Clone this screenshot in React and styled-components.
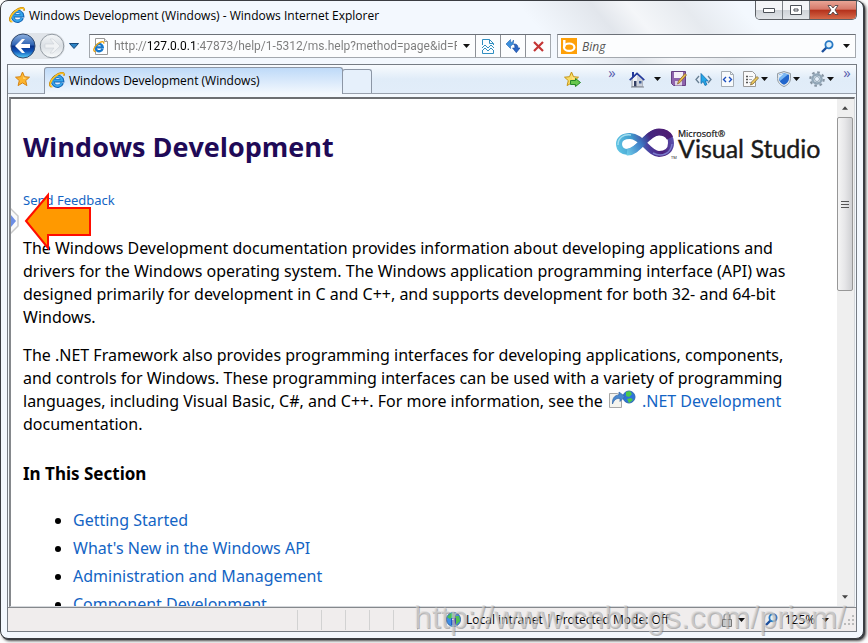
import styled, { createGlobalStyle, css } from "styled-components";

const GlobalStyle = createGlobalStyle`
  * {
    box-sizing: border-box;
  }

  body {
    margin: 0;
    background: #fdfdfd;
    font-family: "Open Sans", "Noto Sans", sans-serif;
    font-size: 12px;
    color: #000;
  }

  button,
  input {
    font: inherit;
    color: inherit;
  }

  button {
    padding: 0;
    border: 0;
    background: none;
  }

  svg {
    display: block;
    flex: none;
  }
`;

const Screen = styled.div`
  position: relative;
  height: 100vh;
  padding: 0 4px 4px 0;
  overflow: hidden;
`;

const Frame = styled.div`
  display: flex;
  flex-direction: column;
  height: 100%;
  padding: 0 6px 6px;
  border: 1px solid #3a3d42;
  border-radius: 8px;
  background:
    linear-gradient(50deg, transparent 62%, #e2e6ec 70%, #f4f6f9 74%, #e6eaef 80%, transparent 86%) 0 0 / 100% 64px no-repeat,
    #f3f8fe;
  box-shadow: 1px 1px 0 #3a3d42, 2px 2px 3px #444;
`;

const TitleBar = styled.header`
  display: flex;
  align-items: flex-start;
  height: 32px;
  padding-left: 2px;
`;

const Title = styled.div`
  flex: 1;
  display: flex;
  align-items: center;
  gap: 4px;
  height: 28px;
`;

const WindowButtons = styled.div`
  display: flex;
  height: 19px;
  border: 1px solid #5c6065;
  border-top: 0;
  border-radius: 0 0 5px 5px;
  overflow: hidden;
`;

const WindowButton = styled.button`
  display: grid;
  place-items: center;
  width: ${(props) => (props.$close ? 46 : 27)}px;
  background: linear-gradient(#f4f5f7 0 48%, #cfd3d8 52%, #e2e5e9);
  border-right: 1px solid #7c8085;

  ${(props) =>
    props.$close &&
    css`
      border-right: 0;
      background: linear-gradient(#e9a596 0, #d6796a 45%, #b5321c 52%, #d66a4a);
    `}
`;

const NavRow = styled.div`
  display: flex;
  align-items: center;
  height: 26px;
  margin-bottom: 5px;
  padding: 0 1px 0 3px;
  gap: 6px;
`;

const History = styled.nav`
  display: flex;
  align-items: center;
  gap: 4px;
  width: 73px;
`;

const RoundPair = styled.div`
  display: flex;
  gap: 3px;
  border-radius: 13px;
  background: #e0e4e9;
`;

const RoundButton = styled.button`
  width: 26px;
  height: 26px;
`;

const Field = styled.div`
  display: flex;
  align-items: center;
  height: 24px;
  min-width: 0;
  border: 1px solid #a3a8ae;
  border-top-color: #6c7178;
  background: #fcfdfe;
  flex: ${(props) => (props.$grow ? "1" : "0 0 299px")};
`;

const FieldIcon = styled.span`
  display: grid;
  place-items: center;
  width: 22px;
`;

const TextInput = styled.input`
  flex: 1;
  min-width: 0;
  height: 22px;
  padding: 0 0 0 2px;
  border: 0;
  outline: 0;
  background: none;

  &::placeholder {
    color: #555;
    font-style: italic;
    opacity: 1;
  }
`;

/* the host name stands out in black, the rest of the address is grey */
const AddressInput = styled(TextInput)`
  color: transparent;
  font-family: Roboto, "Open Sans", sans-serif;
  background: linear-gradient(90deg, #7b7b7b 36px, #000 36px 85px, #7b7b7b 85px);
  background-clip: text;
`;

const FieldButton = styled.button`
  display: grid;
  place-items: center;
  width: ${(props) => props.$width || 25}px;
  height: 22px;
  border-left: ${(props) => (props.$plain ? "0" : "1px solid #8d9197")};
`;

const Panel = styled.div`
  flex: 1;
  min-height: 0;
  display: flex;
  flex-direction: column;
  border: 1px solid #767c84;
  background: #f4f9fe;
`;

const TabBar = styled.div`
  display: flex;
  align-items: stretch;
  height: 29px;
  border-bottom: 1px solid #98a0ac;
  background: linear-gradient(#f8fbfe, #e0ecf8 50%, #e2edf9);
`;

const FavoritesButton = styled.button`
  display: grid;
  place-items: center;
  width: 28px;
  margin-right: 8px;
`;

const Tab = styled.button`
  display: flex;
  align-items: center;
  gap: 4px;
  width: 299px;
  margin: 2px 0 -1px;
  padding: 0 0 2px 4px;
  border: 1px solid #8c96a5;
  border-bottom: 0;
  border-radius: 3px 3px 0 0;
  background: linear-gradient(#bedaf8, #d9e9fb 50%, #f4f9fe);
`;

const NewTab = styled.button`
  width: 30px;
  margin: 4px 0 0 -1px;
  border: 1px solid #8c96a5;
  border-bottom: 0;
  border-radius: 3px 3px 0 0;
  background: #e6f0fb;
`;

const Commands = styled.div`
  flex: 1;
  display: flex;
  justify-content: flex-end;
  align-items: center;
`;

const Command = styled.button`
  display: flex;
  align-items: center;
  justify-content: center;
  gap: ${(props) => props.$gap || 2}px;
  width: ${(props) => props.$width || 24}px;
  height: 24px;
`;

const More = styled.button`
  align-self: flex-start;
  width: ${(props) => props.$width || 18}px;
  height: 14px;
  color: #5a5fae;
  font-size: 15px;
  line-height: 10px;
`;

const Viewport = styled.div`
  position: relative;
  flex: 1;
  min-height: 0;
  display: flex;
  margin: 3px 1px 0;
  border: 2px solid #6d6f72;
  border-right: 1px solid #d5d8dc;
  border-bottom: 1px solid #d5d8dc;
  border-left-color: #85888c;
  background: #fff;
`;

const Article = styled.main`
  flex: 1;
  min-width: 0;
  padding: 29px 16px 0 12px;
  overflow: hidden;
  font-family: "Noto Sans", "Open Sans", sans-serif;
  font-size: 16px;
  line-height: 23px;

  p {
    margin: 0 16px 15px 0;
  }
`;

const Link = styled.a`
  color: #1364c4;
  text-decoration: none;
`;

const InlineIcon = styled.span`
  display: inline-block;
  margin: 0 6px 0 2px;
  vertical-align: -1px;
`;

const ArticleHeader = styled.div`
  display: flex;
  justify-content: space-between;
  align-items: flex-start;
  height: 62px;
`;

const Heading = styled.h1`
  margin: 0;
  color: #1f0a57;
  font-family: "Open Sans", sans-serif;
  font-size: 27px;
  line-height: 38px;
`;

const Feedback = styled.p`
  && {
    margin-bottom: 27px;
  }
  font-size: 13px;
  line-height: 20px;
`;

const Section = styled.h2`
  margin: 26px 0 24px;
  font-size: 17px;
  line-height: 23px;
`;

const Topics = styled.ul`
  margin: 0;
  padding-left: 50px;

  li {
    margin-bottom: 5px;
  }
`;

const Scrollbar = styled.div`
  display: flex;
  flex-direction: column;
  width: 17px;
  padding-right: 1px;
  background: #efefef;
`;

const ScrollButton = styled.button`
  display: grid;
  place-items: center;
  height: 18px;
`;

const ScrollTrack = styled.div`
  flex: 1;
`;

const Thumb = styled.div`
  display: grid;
  place-items: center;
  height: 37%;
  border: 1px solid #979797;
  border-radius: 2px;
  background: linear-gradient(90deg, #f5f5f5, #e6e6e8 50%, #cfd0d3);
`;

const Flyout = styled.button`
  position: absolute;
  left: 0;
  top: 108px;
`;

const Callout = styled.div`
  position: absolute;
  left: 13px;
  top: 93px;
`;

const StatusBar = styled.footer`
  display: flex;
  align-items: center;
  height: 24px;
  border-top: 1px solid #85888c;
  background: #f0eded;
`;

const Cell = styled.div`
  width: 24px;
  height: 20px;
  border-left: 1px solid #d2d2d2;
`;

const Spacer = styled.div`
  flex: 1;
`;

const Zone = styled.div`
  display: flex;
  align-items: center;
  gap: 5px;
  width: 275px;
  padding-left: 5px;
`;

const StatusButton = styled.button`
  display: flex;
  align-items: center;
  justify-content: space-between;
  width: ${(props) => props.$width}px;
  height: 20px;
  padding: 0 5px;
  margin-right: 10px;
`;

const Watermark = styled.div`
  position: absolute;
  right: 22px;
  bottom: 8px;
  color: rgba(214, 214, 214, 0.6);
  font-family: "Liberation Sans", Arial, sans-serif;
  font-size: 32px;
  line-height: 36px;
  text-shadow: 1px 1px 0 rgba(120, 120, 120, 0.5);
  pointer-events: none;
`;

function Caret({ color = "#111", up, small }) {
  return (
    <svg width={small ? 6 : 7} height="4" viewBox="0 0 7 4">
      <path d={up ? "M0 4h7L3.5 0z" : "M0 0h7L3.5 4z"} fill={color} />
    </svg>
  );
}

function IeLogo({ size = 16 }) {
  return (
    <svg width={size} height={size} viewBox="0 0 16 16">
      <path d="M13.3 11A5 5 0 1 1 13.6 8.8H5" fill="none" stroke="#1262b4" strokeWidth="3.4" />
      <path d="M12.9 10.8A4.8 4.8 0 1 1 13.2 8.6H5" fill="none" stroke="#36a4e9" strokeWidth="2" />
      <path d="M4.4 5.8Q6 3.7 9 3.5" fill="none" stroke="#a5defa" strokeWidth="1" />
      <path d="M2.6 14.8C-.8 13.6 1.2 8.4 6.3 4.1 10.8.4 15.6-.5 14.9 3.6" fill="none" stroke="#c98a0b" strokeWidth="2" />
      <path d="M3.6 14.8C-.4 14.4 1 9.200 5.600 4.800 10 .9 14.900-.2 14.600 2.900" fill="none" stroke="#ffc928" strokeWidth="1.200" />
    </svg>
  );
}

function PageLogo() {
  return (
    <svg width="16" height="17" viewBox="0 0 16 17">
      <path d="M2.5.5h9l3 3v13h-12z" fill="#fff" stroke="#999" />
      <path d="M11.5.5v3h3" fill="#eee" stroke="#999" />
      <g transform="translate(0 3) scale(.72)">
        <path d="M13.3 11A5 5 0 1 1 13.6 8.8H5" fill="none" stroke="#1677cb" strokeWidth="3.2" />
        <path d="M3.6 14.8C-.3 14.6.3 9 6.3 4.1 10.8.4 15.6-.5 14.9 3.6" fill="none" stroke="#eba515" strokeWidth="2" />
      </g>
    </svg>
  );
}

function BackIcon() {
  return (
    <svg width="26" height="26" viewBox="0 0 26 26">
      <defs>
        <linearGradient id="back" x1="0" y1="0" x2="0" y2="1">
          <stop offset="0" stopColor="#8eb1e0" />
          <stop offset=".46" stopColor="#2d62b2" />
          <stop offset=".5" stopColor="#0a2f86" />
          <stop offset=".72" stopColor="#1257ba" />
          <stop offset="1" stopColor="#57d2fa" />
        </linearGradient>
      </defs>
      <circle cx="13" cy="13" r="12" fill="url(#back)" stroke="#30496f" />
      <path d="M5 13l7-7h3l-4 5h9v4h-9l4 5h-3z" fill="#fff" />
    </svg>
  );
}

function ForwardIcon() {
  return (
    <svg width="26" height="26" viewBox="0 0 26 26">
      <defs>
        <linearGradient id="forward" x1="0" y1="0" x2="0" y2="1">
          <stop offset="0" stopColor="#f5f7f9" />
          <stop offset=".5" stopColor="#dadfe4" />
          <stop offset="1" stopColor="#f9fbfc" />
        </linearGradient>
      </defs>
      <circle cx="13" cy="13" r="11.8" fill="url(#forward)" stroke="#939ba3" />
      <path d="M21 13l-7-7h-3l4 5H6v4h9l-4 5h3z" fill="#f0f2f4" stroke="#ccd1d6" strokeWidth=".6" />
    </svg>
  );
}

function CompatIcon() {
  return (
    <svg width="12" height="15" viewBox="0 0 12 15" fill="none" stroke="#318ec1">
      <path d="M.5 6V.5h7l4 4V6M7.5.5v4h4M.5 11v3.5h11V11" />
      <path d="M0 9l3-3 3 3 3-3 3 3M0 12l3-3 3 3 3-3 3 3" />
    </svg>
  );
}

function RefreshIcon() {
  return (
    <svg width="14" height="14" viewBox="0 0 14 14">
      <path d="M0 5l4.500-4.500V3.500Q7 3.500 7.500 1 8 6.500 4.500 6.500v3z" fill="#3b8fdc" stroke="#2263b0" strokeWidth=".6" />
      <path d="M6.500 9H9Q9 6 7.500 5 12 4.500 12 9h2l-3.700 4.700z" fill="#2a66c4" stroke="#1a4a9c" strokeWidth=".6" />
    </svg>
  );
}

function StopIcon() {
  return (
    <svg width="11" height="11" viewBox="0 0 11 11">
      <path d="M1 1l9 9M10 1l-9 9" stroke="#c43535" strokeWidth="2.2" />
    </svg>
  );
}

function BingIcon() {
  return (
    <svg width="16" height="16" viewBox="0 0 16 16">
      <path d="M0 0h16v16H0z" fill="#fea008" />
      <path d="M3.300 2v7" stroke="#fff" strokeWidth="2.400" />
      <ellipse cx="8.200" cy="9.200" rx="5.200" ry="3.700" fill="none" stroke="#fff" strokeWidth="2.200" />
    </svg>
  );
}

function SearchIcon({ size = 13 }) {
  return (
    <svg width={size} height={size} viewBox="0 0 13 13">
      <path d="M6 7l-5 5" stroke="#1c4f9c" strokeWidth="2.400" />
      <circle cx="8" cy="4.700" r="3.600" fill="#dff1fc" stroke="#2879c4" strokeWidth="1.800" />
    </svg>
  );
}

function Star({ add }) {
  return (
    <svg width={add ? 17 : 15} height="16" viewBox={add ? "0 0 17 16" : "0 0 15 16"}>
      <path
        d="M7.500 1l2 4.700 5 .5-3.800 3.400 1.200 5-4.400-2.700-4.400 2.700 1.200-5L.500 6.200l5-.5z"
        fill={add ? "#f9dc64" : "#fcb52e"}
        stroke={add ? "#c59516" : "#d58312"}
        strokeLinejoin="round"
      />
      <path d="M7.500 3l1 3.500 3 .5-3 1z" fill="#ffe9a0" />
      {add && <path d="M6.500 9.500h5v-2l5 4-5 4v-2h-5z" fill="#67c84c" stroke="#26882b" />}
    </svg>
  );
}

function HomeIcon() {
  return (
    <svg width="16" height="17" viewBox="0 0 16 17">
      <path d="M3 1h2v5H3z" fill="#23389a" />
      <path d="M3 8l5-5 5.500 5v7.500H3z" fill="#eef1f5" stroke="#7f8591" strokeWidth=".8" />
      <path d="M8 3l5.500 5v7.500H8z" fill="#cbd0da" />
      <path d="M.700 9.200L8 2.300l7.300 6.900" fill="none" stroke="#24399c" strokeWidth="1.600" />
      <path d="M5 10h2.500v5.500H5z" fill="#344064" />
      <path d="M10 10h2.500v2.500H10z" fill="#3f5c93" />
      <path d="M2 16h13" stroke="#7d818b" />
    </svg>
  );
}

function SaveIcon() {
  return (
    <svg width="16" height="16" viewBox="0 0 16 16">
      <path d="M.5.5h14v14H2.500l-2-2z" fill="#8e63ad" stroke="#664183" />
      <path d="M3 1h9v6H3z" fill="#f5eff8" />
      <path d="M4 10h7v4.500H4z" fill="#ddd3e5" />
      <path d="M6.500 13l1-3L14 2.500l1.500 1.500-6.500 7.500z" fill="#e9c04b" stroke="#8c6632" strokeWidth=".8" />
    </svg>
  );
}

function InspectIcon() {
  return (
    <svg width="17" height="13" viewBox="0 0 17 13">
      <path d="M4 3L1 6.500 4 10M13 3l3 3.500-3 3.500" fill="none" stroke="#687f93" strokeWidth="1.300" />
      <path d="M6 .5v10l2.200-2L10 12.500l2-1-1.800-3.500h3z" fill="#24a6e8" stroke="#166eac" strokeWidth=".8" />
    </svg>
  );
}

function SourceIcon() {
  return (
    <svg width="13" height="16" viewBox="0 0 13 16">
      <path d="M.5.500h9l3 3v12H.5z" fill="#f7fafc" stroke="#a5adb5" />
      <path d="M9.500.5v3h3" fill="none" stroke="#a5adb5" />
      <path d="M5 6L2.500 8.500 5 11M8 6l2.500 2.500L8 11" fill="none" stroke="#1b4ec0" strokeWidth="1.400" />
    </svg>
  );
}

function EditIcon() {
  return (
    <svg width="16" height="16" viewBox="0 0 16 16">
      <path d="M.5.5h9l3 3v12H.5z" fill="#fafafa" stroke="#999" />
      <path d="M3 5.500h2M3 8.500h2M3 11.500h2" stroke="#555" strokeWidth="1.400" />
      <path d="M6 5.500h4M6 8.500h3M6 11.500h2" stroke="#a9afb5" />
      <path d="M7.500 14l1-3 5.500-5.500 1.500 1.500-5.500 6z" fill="#edca5c" stroke="#806735" strokeWidth=".8" />
    </svg>
  );
}

function ShieldIcon() {
  return (
    <svg width="14" height="16" viewBox="0 0 14 16">
      <path d="M7 .6L13.400 2.500v5c0 4-2.600 6.500-6.400 8-3.800-1.500-6.400-4-6.400-8v-5z" fill="#e9edf0" stroke="#8d979f" />
      <path d="M7 2.300l5 1.500v3.700c0 3-2 5-5 6.300-3-1.300-5-3.300-5-6.300V3.800z" fill="#2266cc" />
      <path d="M3 10l8.500-7L7 2.300 2 3.800v3.700z" fill="#78b6f3" />
      <path d="M2 7l5-4.500L2 4z" fill="#d8ecfd" />
    </svg>
  );
}

function GearIcon() {
  return (
    <svg width="16" height="16" viewBox="0 0 16 16">
      <circle cx="8" cy="8" r="6.700" fill="none" stroke="#8795a3" strokeWidth="2.200" strokeDasharray="2.600 2.660" />
      <circle cx="8" cy="8" r="4.500" fill="#edf4f9" stroke="#91a6b7" strokeWidth="2.400" />
      <circle cx="8" cy="8" r="2.500" fill="#e7f1fb" stroke="#6b8498" strokeWidth=".7" />
    </svg>
  );
}

function GlobeIcon() {
  return (
    <svg width="15" height="15" viewBox="0 0 15 15">
      <circle cx="7.500" cy="7.500" r="7" fill="#3f8de6" stroke="#336ca3" />
      <path d="M1 5l4-4 4 1-2 4-3 1zM9 4l4 0 1 5-4 4z" fill="#4fc151" />
      <path d="M5 6h5v7H5z" fill="#1036bd" />
      <path d="M6 7h2v1H6z" fill="#fff" />
    </svg>
  );
}

function ExternalIcon() {
  return (
    <svg width="27" height="18" viewBox="0 0 27 18">
      <path d="M.5 3.500h8l4 3v11H.5z" fill="#f5f4ee" stroke="#a8a8a8" />
      <circle cx="20" cy="7" r="6" fill="#2d74d9" stroke="#336aae" />
      <path d="M17 2l4-1 2 3-3 3-3-1zM18 9l4-1 2 2-4 3z" fill="#4dca49" />
      <path d="M3.500 14C3 8 6 5 10 5V2l6 4.500-5 5V8.500C7 8 5 10 3.500 14z" fill="#4a88cf" stroke="#3568a9" strokeWidth=".7" />
    </svg>
  );
}

function VisualStudioLogo() {
  return (
    <svg width="205" height="36" viewBox="0 0 205 36" role="img" aria-label="Microsoft Visual Studio">
      <defs>
        <linearGradient id="loop" gradientUnits="userSpaceOnUse" x1="0" y1="22" x2="58" y2="8">
          <stop offset="0" stopColor="#62c8e6" />
          <stop offset=".3" stopColor="#3f9bcd" />
          <stop offset=".55" stopColor="#4b3d9e" />
          <stop offset=".75" stopColor="#4a1f7a" />
          <stop offset="1" stopColor="#5b56b4" />
        </linearGradient>
        <linearGradient id="band" gradientUnits="userSpaceOnUse" x1="10" y1="26" x2="50" y2="4">
          <stop offset="0" stopColor="#6fd0ea" />
          <stop offset=".4" stopColor="#3b78c4" />
          <stop offset=".65" stopColor="#43257f" />
          <stop offset="1" stopColor="#4d1d74" />
        </linearGradient>
      </defs>
      <path
        d="M12 24C22 24 31 4 43 4c8 0 12 5 12 11s-4 11-12 11C33 26 26 8 14 8 7 8 3 11 3 16s4 8 9 8z"
        fill="none"
        stroke="url(#loop)"
        strokeWidth="6"
      />
      <path d="M11 24C22 25 31 4 43 4c5 0 9 2 11 6" fill="none" stroke="url(#band)" strokeWidth="7" />
      <path d="M2 17C2 10 7 6 15 7" fill="none" stroke="#a3deef" strokeWidth="1.500" />
      <path d="M37 25c9 5 18 0 19-9" fill="none" stroke="#7a7ccc" strokeWidth="1.500" />
      <text x="62" y="9" fontFamily="Open Sans" fontSize="9" fill="#111" stroke="#111" strokeWidth=".2">Microsoft®</text>
      <text x="62" y="30" fontFamily="Lato" fontSize="25" fill="#1b1b1b" stroke="#1b1b1b" strokeWidth=".4">Visual Studio</text>
      <text x="55" y="31" fontFamily="Open Sans" fontSize="4" fill="#111">TM</text>
    </svg>
  );
}

const topics = [
  "Getting Started",
  "What's New in the Windows API",
  "Administration and Management",
  "Component Development",
];

function BrowserChrome() {
  return (
    <>
      <TitleBar>
        <Title>
          <IeLogo />
          Windows Development (Windows) - Windows Internet Explorer
        </Title>
        <WindowButtons>
          <WindowButton aria-label="Minimize">
            <svg width="12" height="5" viewBox="0 0 12 5">
              <path d="M.5.500h11v4H.5z" fill="#fff" stroke="#4c5158" />
            </svg>
          </WindowButton>
          <WindowButton aria-label="Maximize">
            <svg width="12" height="10" viewBox="0 0 12 10">
              <path d="M.5.500h11v9H.5zM4 4h4v2H4z" fill="#fff" stroke="#4c5158" />
            </svg>
          </WindowButton>
          <WindowButton $close aria-label="Close">
            <svg width="12" height="10" viewBox="0 0 12 10">
              <path d="M1 .5h3l2 2.500 2-2.500h3L8 5l3 4.500H8L6 7 4 9.500H1L4 5z" fill="#fff" stroke="#50474a" strokeWidth=".9" />
            </svg>
          </WindowButton>
        </WindowButtons>
      </TitleBar>
      <NavRow>
        <History>
          <RoundPair>
            <RoundButton aria-label="Back"><BackIcon /></RoundButton>
            <RoundButton aria-label="Forward"><ForwardIcon /></RoundButton>
          </RoundPair>
          <button aria-label="Recent pages">
            <svg width="10" height="6" viewBox="0 0 10 6">
              <path d="M.5.500h9L5 5.500z" fill="#2c83c6" stroke="#174a7c" />
            </svg>
          </button>
        </History>
        <Field $grow>
          <FieldIcon><PageLogo /></FieldIcon>
          <AddressInput
            aria-label="Address"
            defaultValue="http://127.0.0.1:47873/help/1-5312/ms.help?method=page&id=F"
          />
          <FieldButton $plain $width={18} aria-label="Show addresses"><Caret /></FieldButton>
          <FieldButton aria-label="Compatibility view"><CompatIcon /></FieldButton>
          <FieldButton aria-label="Refresh"><RefreshIcon /></FieldButton>
          <FieldButton aria-label="Stop"><StopIcon /></FieldButton>
        </Field>
        <Field>
          <FieldIcon><BingIcon /></FieldIcon>
          <TextInput aria-label="Search" placeholder="Bing" />
          <FieldButton $plain $width={22} aria-label="Search the web"><SearchIcon /></FieldButton>
          <FieldButton $plain $width={17} aria-label="Search options"><Caret /></FieldButton>
        </Field>
      </NavRow>
    </>
  );
}

function Tabs() {
  return (
    <TabBar>
      <FavoritesButton aria-label="Favorites"><Star /></FavoritesButton>
      <Tab>
        <IeLogo />
        Windows Development (Windows)
      </Tab>
      <NewTab aria-label="New tab" />
      <Commands>
        <Command $width={58} aria-label="Add to favorites"><Star add /></Command>
        <More $width={22} aria-label="More favorites">»</More>
        <Command $width={44} $gap={9} aria-label="Home"><HomeIcon /><Caret /></Command>
        <Command aria-label="Save"><SaveIcon /></Command>
        <Command aria-label="Inspect"><InspectIcon /></Command>
        <Command aria-label="View source"><SourceIcon /></Command>
        <Command $width={33} aria-label="Edit"><EditIcon /><Caret /></Command>
        <Command $width={33} aria-label="Safety"><ShieldIcon /><Caret /></Command>
        <Command $width={33} aria-label="Tools"><GearIcon /><Caret /></Command>
        <More aria-label="More commands">»</More>
      </Commands>
    </TabBar>
  );
}

function HelpPage() {
  return (
    <Article>
      <ArticleHeader>
        <Heading>Windows Development</Heading>
        <VisualStudioLogo />
      </ArticleHeader>
      <Feedback>
        <Link href="#feedback">Send Feedback</Link>
      </Feedback>
      <p>
        The Windows Development documentation provides information about developing applications and
        drivers for the Windows operating system. The Windows application programming interface (API) was
        designed primarily for development in C and C++, and supports development for both 32- and 64-bit
        Windows.
      </p>
      <p>
        The .NET Framework also provides programming interfaces for developing applications, components,
        and controls for Windows. These programming interfaces can be used with a variety of programming
        languages, including Visual Basic, C#, and C++. For more information, see the{" "}
        <InlineIcon><ExternalIcon /></InlineIcon>
        <Link href="#net">.NET Development</Link> documentation.
      </p>
      <Section>In This Section</Section>
      <Topics>
        {topics.map((topic) => (
          <li key={topic}>
            <Link href="#topic">{topic}</Link>
          </li>
        ))}
      </Topics>
    </Article>
  );
}

function Status() {
  return (
    <StatusBar>
      <Spacer />
      {[1, 2, 3, 4, 5, 6].map((cell) => (
        <Cell key={cell} />
      ))}
      <Zone>
        <GlobeIcon />
        Local intranet | Protected Mode: Off
      </Zone>
      <StatusButton $width={34} aria-label="Privacy">
        <svg width="12" height="14" viewBox="0 0 12 14">
          <path d="M3 7V4a3 3 0 0 1 6 0v3" fill="none" stroke="#999" strokeWidth="1.500" />
          <path d="M1.500 6.500h9v7h-9z" fill="#c5c7c9" stroke="#777" />
        </svg>
        <Caret />
      </StatusButton>
      <StatusButton $width={74} aria-label="Zoom level">
        <SearchIcon />
        125%
        <Caret />
      </StatusButton>
      <svg width="12" height="12" viewBox="0 0 12 12">
        <path d="M8 1h2v2H8zM4 5h2v2H4zM8 5h2v2H8zM0 9h2v2H0zM4 9h2v2H4zM8 9h2v2H8z" fill="#bbb" />
      </svg>
    </StatusBar>
  );
}

export default function App() {
  return (
    <Screen>
      <GlobalStyle />
      <Frame>
        <BrowserChrome />
        <Panel>
          <Tabs />
          <Viewport>
            <HelpPage />
            <Scrollbar>
              <ScrollButton aria-label="Scroll up"><Caret up small color="#444" /></ScrollButton>
              <ScrollTrack>
                <Thumb>
                  <svg width="8" height="8" viewBox="0 0 8 8">
                    <path d="M0 1.500h8M0 4.500h8M0 7.500h8" stroke="#555" />
                  </svg>
                </Thumb>
              </ScrollTrack>
              <ScrollButton aria-label="Scroll down"><Caret small color="#444" /></ScrollButton>
            </Scrollbar>
            <Flyout aria-label="Show contents">
              <svg width="8" height="28" viewBox="0 0 8 28">
                <path d="M-1 1l8 8v10l-8 8z" fill="#fafafa" stroke="#c9c9c9" strokeWidth="1.500" />
                <path d="M0 8l5 6-5 6z" fill="#6c8ee5" />
              </svg>
            </Flyout>
            <Callout>
              <svg width="68" height="58" viewBox="0 0 68 58">
                <path d="M2 29L24 3v13h42v27H24v13z" fill="#ff9900" stroke="#ff0d00" strokeWidth="2" />
              </svg>
            </Callout>
          </Viewport>
          <Status />
        </Panel>
      </Frame>
      <Watermark>http://www.cnblogs.com/prism/</Watermark>
    </Screen>
  );
}
